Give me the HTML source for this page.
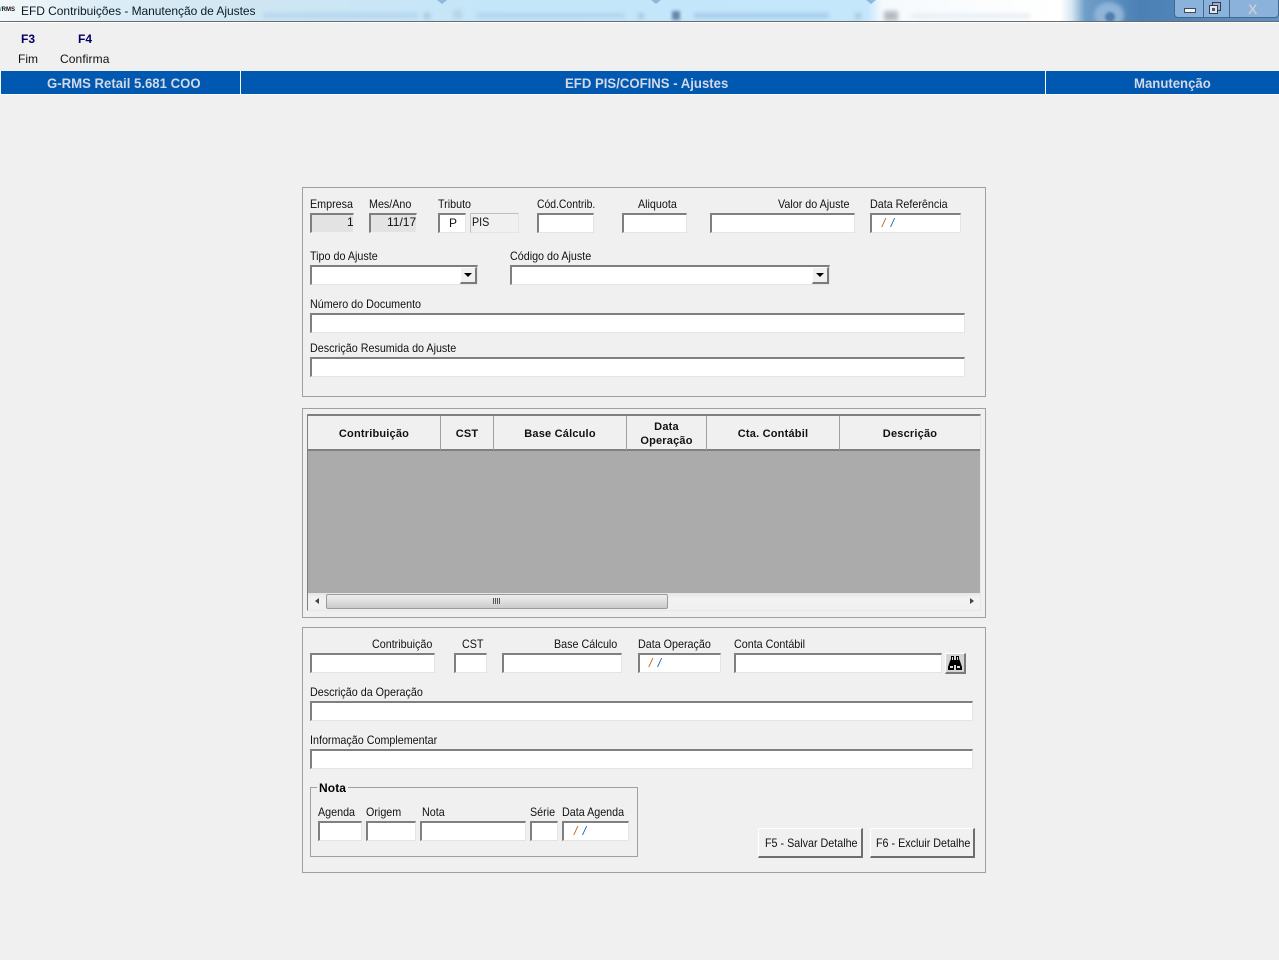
<!DOCTYPE html>
<html><head><meta charset="utf-8"><style>
html,body{margin:0;padding:0;background:#f0f0f0}
#r{position:relative;width:1279px;height:960px;overflow:hidden;background:#f0f0f0;font:12px/14px "Liberation Sans",sans-serif;color:#111}
#r div,#r span{position:absolute;box-sizing:border-box}
.l{white-space:nowrap;transform:scaleX(.895);transform-origin:0 0}
.n{white-space:nowrap}
.bar{white-space:nowrap;font-weight:bold;font-size:14px;line-height:15px;color:#d2d8e8;top:76px;transform:scaleX(.94);transform-origin:0 0}
.f{background:#fff;border-style:solid;border-width:2px 1px 1px 2px;border-color:#7f7f7f #e4e4e4 #e4e4e4 #7f7f7f}
.g{background:#e3e3e3;border-color:#7f7f7f #f0f0f0 #f0f0f0 #7f7f7f}
.p{border:1px solid #a0a0a0}
.h{font:bold 11px/12px "Liberation Sans",sans-serif;text-align:center;color:#111;letter-spacing:.2px}
.sl{width:1px;background:#a0a0a0;top:416px;height:34px}
.ar{width:0;height:0;border-left:4px solid transparent;border-right:4px solid transparent;border-top:4px solid #000}
.dr{width:17px;height:17px;background:#f0f0f0;border-style:solid;border-width:1px 2px 2px 1px;border-color:#fff #7a7a7a #7a7a7a #fff}
.b{background:#f0f0f0;border-style:solid;border-width:1px 2px 2px 1px;border-color:#fff #6e6e6e #6e6e6e #fff}
.d{font-size:12px;white-space:nowrap;word-spacing:2px}
.fz{filter:blur(2px)}
</style></head><body><div id="r">

<div style="left:0;top:0;width:1279px;height:21px;overflow:hidden;background:linear-gradient(90deg,#f3f7f9 0,#f0f6f8 16px,#dcedf6 100px,#cfe6f2 250px,#c4e6fa 500px,#c5e7fb 868px,#f6fafc 882px,#ffffff 1060px,#d5e6f2 1072px,#6f9ec8 1085px,#4b80b4 1140px,#5f93c6 1279px)">
 <div class="fz" style="left:263px;top:13px;width:155px;height:5px;background:#b4d6ee"></div>
 <div class="fz" style="left:477px;top:13px;width:148px;height:5px;background:#b0d4ee"></div>
 <div class="fz" style="left:694px;top:13px;width:135px;height:5px;background:#a4cbea"></div>
 <div class="fz" style="left:911px;top:14px;width:119px;height:4px;background:#e3ecf3"></div>
 <div class="fz" style="left:424px;top:13px;width:6px;height:6px;background:#a8c6de"></div>
 <div class="fz" style="left:638px;top:13px;width:6px;height:6px;background:#a8c6de"></div>
 <div class="fz" style="left:855px;top:13px;width:6px;height:6px;background:#a8c6de"></div>
 <div class="fz" style="left:453px;top:10px;width:9px;height:9px;background:#b8d4e6"></div>
 <div style="left:672px;top:11px;width:8px;height:9px;background:#6486a8;filter:blur(1.5px)"></div>
 <div class="fz" style="left:884px;top:11px;width:14px;height:10px;background:#b4bbc2"></div>
 <div style="left:437px;top:0;width:0;height:0;border-left:5px solid transparent;border-right:5px solid transparent;border-top:4px solid #8cb8e0"></div>
 <div style="left:651px;top:0;width:0;height:0;border-left:5px solid transparent;border-right:5px solid transparent;border-top:4px solid #8cb8e0"></div>
 <div style="left:866px;top:0;width:0;height:0;border-left:5px solid transparent;border-right:5px solid transparent;border-top:4px solid #8cb8e0"></div>
 <div class="fz" style="left:1094px;top:2px;width:30px;height:26px;border-radius:50%;background:#8fb4d8"></div>
 <div style="left:1105px;top:12px;width:10px;height:10px;border-radius:50%;background:#4f7fb0;filter:blur(1px)"></div>
 <div style="left:1174px;top:-2px;width:105px;height:20px;background:#8ab2da;border:1px solid #44688c;border-radius:0 0 4px 4px"></div>
 <div style="left:1203px;top:-2px;width:1px;height:19px;background:#44688c"></div>
 <div style="left:1229px;top:-2px;width:1px;height:19px;background:#44688c"></div>
 <div style="left:1184px;top:8px;width:12px;height:5px;background:#f2f2f2;border:1px solid #3c4c5c"></div>
 <svg style="position:absolute;left:1209px;top:2px" width="12" height="12"><rect x="3.5" y=".5" width="8" height="8" fill="#aac" stroke="#2f3f4f"/><rect x=".5" y="3.5" width="8" height="8" fill="#dfe8f0" stroke="#2f3f4f"/><rect x="3" y="6" width="3" height="3" fill="#556"/></svg>
 <span class="n" style="left:1248px;top:2px;font:bold 14px/14px 'Liberation Sans';color:#c4ccd4">X</span>
 <span class="n" style="left:0;top:7px;font:bold 6px/7px 'Liberation Sans';color:#111"><b style="color:#10a0a0">/</b>RMS</span>
 <span class="n" style="left:21px;top:4px;font-size:12px;line-height:15px;color:#0c1a28;letter-spacing:-.04px">EFD Contribuições - Manutenção de Ajustes</span>
</div>
<div style="left:0;top:21px;width:1279px;height:1px;background:#6a6a6a"></div>
<div style="left:0;top:22px;width:1279px;height:1px;background:#fff"></div>

<span class="n" style="left:21px;top:32px;font-weight:bold;font-size:12px;color:#000060">F3</span>
<span class="n" style="left:78px;top:32px;font-weight:bold;font-size:12px;color:#000060">F4</span>
<span class="n" style="left:18px;top:52px">Fim</span>
<span class="n" style="left:60px;top:52px;letter-spacing:.1px">Confirma</span>

<div style="left:0;top:71px;width:1279px;height:23px;background:#0058b0"></div>
<div style="left:0;top:71px;width:1px;height:23px;background:#fff"></div>
<div style="left:240px;top:71px;width:1px;height:23px;background:#fff"></div>
<div style="left:1045px;top:71px;width:1px;height:23px;background:#fff"></div>
<div style="left:0;top:94px;width:1279px;height:1px;background:#fafafa"></div>
<span class="bar" style="left:47px">G-RMS Retail 5.681 COO</span>
<span class="bar" style="left:565px">EFD PIS/COFINS - Ajustes</span>
<span class="bar" style="left:1134px">Manutenção</span>

<!-- Panel 1 -->
<div class="p" style="left:302px;top:187px;width:684px;height:210px"></div>
<span class="l" style="left:310px;top:197px">Empresa</span>
<span class="l" style="left:369px;top:197px">Mes/Ano</span>
<span class="l" style="left:438px;top:197px">Tributo</span>
<span class="l" style="left:537px;top:197px;transform:scaleX(.865)">Cód.Contrib.</span>
<span class="l" style="left:638px;top:197px">Aliquota</span>
<span class="l" style="left:778px;top:197px">Valor do Ajuste</span>
<span class="l" style="left:870px;top:197px">Data Referência</span>
<div class="f g" style="left:310px;top:213px;width:44px;height:20px"></div>
<span class="n" style="left:347px;top:215px">1</span>
<div class="f g" style="left:369px;top:213px;width:48px;height:20px"></div>
<span class="n" style="left:387px;top:215px">11/17</span>
<div class="f" style="left:438px;top:213px;width:28px;height:20px"></div>
<span class="n" style="left:449px;top:216px">P</span>
<div style="left:470px;top:213px;width:49px;height:20px;border:1px solid;border-color:#c0c0c0 #e4e4e4 #e4e4e4 #c0c0c0"></div>
<span class="l" style="left:472px;top:215px">PIS</span>
<div class="f" style="left:537px;top:213px;width:57px;height:20px"></div>
<div class="f" style="left:622px;top:213px;width:65px;height:20px"></div>
<div class="f" style="left:710px;top:213px;width:145px;height:20px"></div>
<div class="f" style="left:870px;top:213px;width:91px;height:20px"></div>
<span class="d" style="left:882px;top:216px"><i style="color:#c06010">/</i> <i style="color:#1060c0">/</i></span>

<span class="l" style="left:310px;top:249px">Tipo do Ajuste</span>
<span class="l" style="left:510px;top:249px">Código do Ajuste</span>
<div class="f" style="left:310px;top:265px;width:168px;height:20px"></div>
<div class="dr" style="left:460px;top:267px"><div class="ar" style="left:3px;top:5px"></div></div>
<div class="f" style="left:510px;top:265px;width:320px;height:20px"></div>
<div class="dr" style="left:812px;top:267px"><div class="ar" style="left:3px;top:5px"></div></div>

<span class="l" style="left:310px;top:297px">Número do Documento</span>
<div class="f" style="left:310px;top:313px;width:655px;height:20px"></div>
<span class="l" style="left:310px;top:341px">Descrição Resumida do Ajuste</span>
<div class="f" style="left:310px;top:357px;width:655px;height:20px"></div>

<!-- Panel 2 -->
<div class="p" style="left:302px;top:408px;width:684px;height:210px"></div>
<div style="left:307px;top:414px;width:674px;height:197px;border-style:solid;border-width:2px 1px 1px 1px;border-color:#7f7f7f #e8e8e8 #e8e8e8 #7f7f7f"></div>
<div style="left:308px;top:450px;width:672px;height:143px;background:#ababab"></div>
<div style="left:308px;top:449px;width:672px;height:2px;background:#7f7f7f"></div>
<div class="sl" style="left:440px"></div>
<div class="sl" style="left:493px"></div>
<div class="sl" style="left:626px"></div>
<div class="sl" style="left:706px"></div>
<div class="sl" style="left:839px"></div>
<div class="h" style="left:308px;top:428px;width:132px">Contribuição</div>
<div class="h" style="left:441px;top:428px;width:52px">CST</div>
<div class="h" style="left:494px;top:428px;width:132px">Base Cálculo</div>
<div class="h" style="left:627px;top:420px;width:79px;line-height:14px">Data<br>Operação</div>
<div class="h" style="left:707px;top:428px;width:132px">Cta. Contábil</div>
<div class="h" style="left:840px;top:428px;width:140px">Descrição</div>
<!-- scrollbar -->
<div style="left:308px;top:593px;width:672px;height:17px;background:linear-gradient(#e6e6e6,#f2f2f2 30%,#f0f0f0)"></div>
<div style="left:326px;top:594px;width:342px;height:15px;border:1px solid #9a9b9b;border-radius:2px;background:linear-gradient(#eeeeee,#dedede 50%,#cacaca)"></div>
<div style="left:493px;top:598px;width:7px;height:6px;background:repeating-linear-gradient(90deg,#555 0,#555 1px,#ddd 1px,#ddd 2px)"></div>
<div style="left:315px;top:598px;width:0;height:0;border-top:3.5px solid transparent;border-bottom:3.5px solid transparent;border-right:4px solid #444"></div>
<div style="left:970px;top:598px;width:0;height:0;border-top:3.5px solid transparent;border-bottom:3.5px solid transparent;border-left:4px solid #444"></div>

<!-- Panel 3 -->
<div class="p" style="left:302px;top:627px;width:684px;height:246px"></div>
<span class="l" style="left:372px;top:637px">Contribuição</span>
<span class="l" style="left:462px;top:637px">CST</span>
<span class="l" style="left:554px;top:637px">Base Cálculo</span>
<span class="l" style="left:638px;top:637px">Data Operação</span>
<span class="l" style="left:734px;top:637px">Conta Contábil</span>
<div class="f" style="left:310px;top:653px;width:125px;height:20px"></div>
<div class="f" style="left:454px;top:653px;width:33px;height:20px"></div>
<div class="f" style="left:502px;top:653px;width:120px;height:20px"></div>
<div class="f" style="left:638px;top:653px;width:83px;height:20px"></div>
<span class="d" style="left:649px;top:656px"><i style="color:#c06010">/</i> <i style="color:#1060c0">/</i></span>
<div class="f" style="left:734px;top:653px;width:208px;height:20px"></div>
<div style="left:945px;top:653px;width:21px;height:21px;background:#d4d4d4;border-style:solid;border-width:1px 2px 2px 1px;border-color:#fff #7a7a7a #7a7a7a #fff"></div>
<svg style="position:absolute;left:947px;top:655px" width="16" height="16" viewBox="0 0 16 16"><path d="M4 1h3v4h2V1h3v3l1 2 2 6v3h-6v-5H7v5H1v-3l2-6 1-2z" fill="#000"/><path d="M5 2h1v3H5zM10 2h1v3h-1zM3 11h3v2H3zM10 11h3v2h-3z" fill="#ddd"/></svg>
<span class="l" style="left:310px;top:685px">Descrição da Operação</span>
<div class="f" style="left:310px;top:701px;width:663px;height:20px"></div>
<span class="l" style="left:310px;top:733px">Informação Complementar</span>
<div class="f" style="left:310px;top:749px;width:663px;height:20px"></div>

<!-- Nota -->
<div style="left:310px;top:787px;width:328px;height:70px;border:1px solid #a0a0a0"></div>
<span class="n" style="left:317px;top:781px;padding:0 2px;background:#f0f0f0;font-weight:bold;font-size:12px;color:#000;letter-spacing:.1px">Nota</span>
<span class="l" style="left:318px;top:805px">Agenda</span>
<span class="l" style="left:366px;top:805px">Origem</span>
<span class="l" style="left:422px;top:805px">Nota</span>
<span class="l" style="left:530px;top:805px">Série</span>
<span class="l" style="left:562px;top:805px">Data Agenda</span>
<div class="f" style="left:318px;top:821px;width:44px;height:20px"></div>
<div class="f" style="left:366px;top:821px;width:50px;height:20px"></div>
<div class="f" style="left:420px;top:821px;width:106px;height:20px"></div>
<div class="f" style="left:530px;top:821px;width:28px;height:20px"></div>
<div class="f" style="left:562px;top:821px;width:67px;height:20px"></div>
<span class="d" style="left:574px;top:824px"><i style="color:#c06010">/</i> <i style="color:#1060c0">/</i></span>

<div class="b" style="left:758px;top:828px;width:105px;height:30px"></div>
<span class="l" style="left:765px;top:836px">F5 - Salvar Detalhe</span>
<div class="b" style="left:870px;top:828px;width:105px;height:30px"></div>
<span class="l" style="left:876px;top:836px">F6 - Excluir Detalhe</span>
</div></body></html>
